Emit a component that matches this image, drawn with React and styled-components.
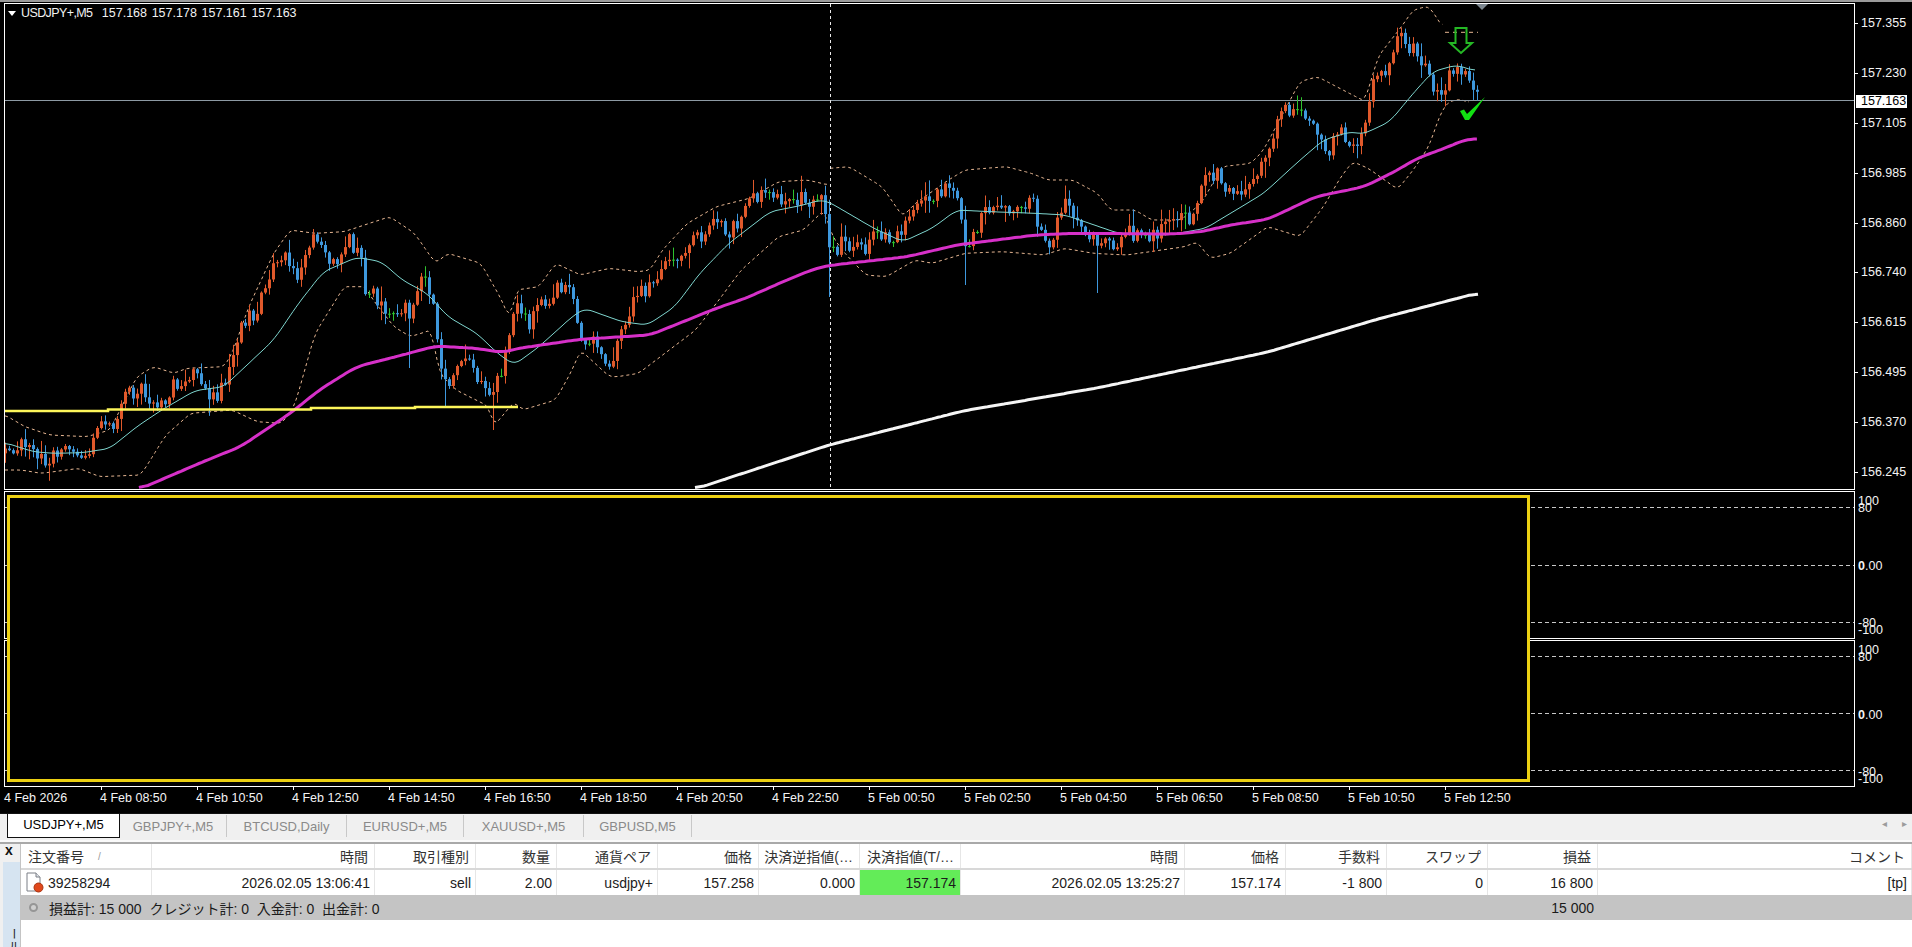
import React, { useMemo } from 'react';
import styled, { createGlobalStyle } from 'styled-components';

// MT4 style terminal: chart panes on top, tab strip and trade history below.

const GlobalStyle = createGlobalStyle`
  html, body { margin: 0; padding: 0; background: #fff; overflow: hidden; }
  * { box-sizing: border-box; }
`;

const FONT = `"Liberation Sans", "Noto Sans CJK JP", sans-serif`;

const Page = styled.div`
  width: 1912px;
  height: 947px;
  display: flex;
  flex-direction: column;
  font-family: ${FONT};
  font-size: 12.5px;
  overflow: hidden;
  background: #fff;
`;

const TopEdge = styled.div`
  height: 2px;
  background: #9a9a9a;
  flex-shrink: 0;
`;

const ChartArea = styled.div`
  position: relative;
  height: 811px;
  flex-shrink: 0;
  background: #000;
  padding: 1px 0 0 4px;
  color: #f4f4f4;
`;

const Pane = styled.div`
  display: flex;
  height: ${(p) => p.$height}px;
  margin-bottom: ${(p) => p.$gap || 0}px;
`;

const Plot = styled.div`
  position: relative;
  width: 1851px;
  flex-shrink: 0;
  border: 1px solid #fff;
  overflow: hidden;
  svg { display: block; }
`;

const Legend = styled.div`
  position: absolute;
  left: 3px;
  top: 2px;
  display: flex;
  align-items: center;
  gap: 5px;
  line-height: 14px;
  white-space: pre;
  word-spacing: 1.2px;
  color: #f2f2f2;
  span { letter-spacing: -0.6px; }
`;

const LegendArrow = styled.i`
  width: 0;
  height: 0;
  border-left: 4.5px solid transparent;
  border-right: 4.5px solid transparent;
  border-top: 5px solid #fff;
`;

const Marker = styled.i`
  position: absolute;
  left: 1471px;
  top: 0;
  width: 0;
  height: 0;
  border-left: 6px solid transparent;
  border-right: 6px solid transparent;
  border-top: 6px solid #7d8790;
`;

const PriceScale = styled.div`
  position: relative;
  width: 57px;
  padding-top: 13px;
  display: flex;
  flex-direction: column;
`;

const PriceRow = styled.div`
  position: relative;
  height: 49.9px;
  flex-shrink: 0;
  padding-left: 6px;
  line-height: 14px;
  &::before {
    content: '';
    position: absolute;
    left: 0;
    top: 7px;
    width: 3px;
    height: 1px;
    background: #fff;
  }
`;

const PriceTag = styled.div`
  position: absolute;
  left: 1px;
  top: 92px;
  width: 51px;
  height: 13px;
  line-height: 13px;
  padding-left: 5px;
  background: #fff;
  color: #000;
`;

const LevelStack = styled.div`
  height: 100%;
  padding: 15px 0;
  display: flex;
  flex-direction: column;
  justify-content: space-between;
`;

const Level = styled.div`
  height: 1px;
  background: repeating-linear-gradient(90deg, #c8c8c8 0 4px, transparent 4px 7px);
`;

const SubScale = styled.div`
  position: relative;
  width: 57px;
`;

const ScaleLabel = styled.div`
  position: absolute;
  left: 3px;
  top: ${(p) => p.$top}px;
  line-height: 12px;
  b { font-weight: 700; }
`;

const YellowBox = styled.div`
  position: absolute;
  left: 7px;
  top: 493px;
  width: 1523px;
  height: 287px;
  border: 3px solid #ecd012;
  background: #000;
`;

const TimeAxis = styled.div`
  display: flex;
  height: 24px;
`;

const TimeLabel = styled.div`
  position: relative;
  width: 96px;
  flex-shrink: 0;
  padding-top: 4px;
  line-height: 14px;
  white-space: nowrap;
  &::before {
    content: '';
    position: absolute;
    left: 1px;
    top: 0;
    width: 1px;
    height: 3px;
    background: ${(p) => (p.$first ? 'transparent' : '#fff')};
  }
`;

const TabStrip = styled.div`
  display: flex;
  align-items: flex-start;
  height: 27px;
  padding-left: 7px;
  flex-shrink: 0;
  background: #f0f0f0;
  border-top: 1px solid #111;
  box-shadow: 0 -1px 0 #e8e8e8;
`;

const Tab = styled.div`
  height: ${(p) => (p.$active ? 24 : 22)}px;
  line-height: ${(p) => (p.$active ? 22 : 24)}px;
  width: ${(p) => p.$width}px;
  font-size: 13px;
  text-align: center;
  white-space: nowrap;
  color: ${(p) => (p.$active ? '#000' : '#8a8a8a')};
  background: ${(p) => (p.$active ? '#fff' : 'transparent')};
  border-left: ${(p) => (p.$active ? '1px solid #111' : '0')};
  border-right: 1px solid ${(p) => (p.$active ? '#111' : '#c8c8c8')};
  border-bottom: ${(p) => (p.$active ? '1px solid #111' : '0')};
  margin-top: ${(p) => (p.$active ? 0 : 1)}px;
`;

const TabScroll = styled.div`
  margin-left: auto;
  display: flex;
  gap: 15px;
  padding: 4px 5px 0 0;
  font-size: 10px;
  line-height: 12px;
  color: #9c9c9c;
`;

const Dock = styled.div`
  flex: 1;
  display: flex;
  min-height: 0;
  margin-top: 2px;
  border-top: 2px solid #a9a9a9;
  box-shadow: 0 -2px 0 #fafafa;
  font-size: 14px;
`;

const DockSide = styled.div`
  position: relative;
  width: 20px;
  flex-shrink: 0;
  background: #f0f0f0;
`;

const DockClose = styled.div`
  margin-left: 5px;
  font-size: 14px;
  line-height: 12px;
  font-weight: 700;
  color: #111;
`;

const DockTitle = styled.div`
  position: absolute;
  left: 3px;
  top: 18px;
  bottom: 0;
  width: 17px;
  padding-top: 66px;
  background: #d6e4f1;
  writing-mode: vertical-rl;
  font-size: 12px;
  line-height: 15px;
  color: #222;
  white-space: nowrap;
  overflow: hidden;
`;

const Table = styled.div`
  flex: 1;
  display: flex;
  flex-direction: column;
  min-width: 0;
  border-left: 1px solid #c4c4c4;
`;

const Row = styled.div`
  display: grid;
  grid-template-columns: 131px 223px 101px 81px 101px 101px 101px 101px 224px 101px 101px 101px 110px 1fr;
  height: ${(p) => p.$height}px;
  flex-shrink: 0;
  border-bottom: ${(p) => (p.$rule ? '2px solid #d8d8d8' : '0')};
`;

const Cell = styled.div`
  display: flex;
  align-items: center;
  justify-content: ${(p) => (p.$left ? 'flex-start' : 'flex-end')};
  gap: 4px;
  padding: 0 ${(p) => (p.$left ? 0 : 4)}px 0 ${(p) => (p.$left ? 4 : 0)}px;
  border-right: 1px solid #e6e6e6;
  background: ${(p) => p.$bg || 'transparent'};
  color: #1c1c1c;
  white-space: nowrap;
  overflow: hidden;
`;

const HeadCell = styled(Cell)`
  color: #333;
  padding-right: ${(p) => (p.$left ? 0 : 6)}px;
  padding-left: ${(p) => (p.$left ? 7 : 0)}px;
`;

const SortMark = styled.span`
  margin-left: 10px;
  color: #999;
  font-size: 10px;
`;

const SummaryRow = styled.div`
  display: grid;
  grid-template-columns: 1467px 110px 1fr;
  height: 25px;
  flex-shrink: 0;
  background: #c4c4c4;
  color: #1a1a1a;
`;

const SummaryText = styled.div`
  display: flex;
  align-items: center;
  gap: 11px;
  padding-left: 8px;
  white-space: pre;
`;

const SummaryTotal = styled.div`
  display: flex;
  align-items: center;
  justify-content: flex-end;
  padding-right: 4px;
`;

const Bullet = styled.i`
  width: 9px;
  height: 9px;
  border-radius: 50%;
  border: 2px solid #969696;
  background: #cfcfcf;
`;

/* ---------- chart geometry, all in page pixels ---------- */

const fromA = (pts) => pts.map(([x, y]) => [x / 2.412, 200 + y / 3]); // left third
const fromB = (pts) => pts.map(([x, y]) => [650 + x / 2.412, 130 + y / 3]); // middle
const fromC = (pts) => pts.map(([x, y]) => [1300 + x / 2.562, y / 3]); // right

const PRICE = [
  ...fromA([[12,760],[40,730],[60,730],[90,790],[130,760],[160,720],[205,770],[230,690],[270,680],[300,600],[330,560],[350,590],[390,610],[430,540],[470,520],[520,600],[550,520],[580,370],[620,330],[660,210],[680,170],[720,240],[760,110],[800,190],[840,120],[870,170],[880,260],[950,340],[990,330],[1010,240],[1030,240],[1050,350],[1060,480],[1080,560],[1130,470],[1170,570],[1190,590],[1225,430],[1250,300],[1270,380],[1345,250],[1385,290],[1400,420],[1440,420],[1470,520],[1490,400],[1530,300]]),
  ...fromB([[0,470],[30,420],[60,390],[100,340],[170,250],[190,320],[240,210],[260,190],[330,200],[420,220],[432,360],[470,340],[520,350],[545,310],[590,320],[640,240],[680,190],[735,180],[750,280],[765,360],[790,280],[830,210],[880,260],[920,180],[930,300],[960,340],[1000,230],[1040,300],[1080,340],[1130,330],[1150,310],[1230,310],[1280,265],[1310,265],[1340,150],[1370,120],[1400,200],[1470,120],[1495,60],[1505,0]]),
  [1283, 104],
  [1292, 112],
  ...fromC([[0,300],[20,370],[40,380],[65,460],[105,400],[135,440],[165,400],[180,270],[205,210],[230,200],[255,110],[300,160],[330,240],[360,285],[395,190],[425,210],[440,280],[458,296]]),
];

const MAGENTA = [
  ...fromA([[335,868],[490,785],[580,740],[700,640],[770,570],[860,500],[980,462],[1050,438],[1150,445],[1210,458],[1250,445],[1400,418],[1568,405]]),
  ...fromB([[30,600],[160,535],[230,505],[330,450],[400,415],[440,405],[620,380],[740,345],[930,315],[1020,310],[1260,312],[1330,305],[1400,285],[1490,268],[1568,222]]),
  ...fromC([[40,590],[165,560],[250,510],[300,475],[370,445],[425,418],[455,416]]),
];

const WHITE_LINE = [[695,489],[756,469],[829,445],[963,411],[1097,388],[1268,352],[1378,319],[1478,293]];

const CYAN = [
  ...fromA([[12,728],[80,755],[130,760],[200,758],[265,745],[330,680],[390,630],[470,572],[540,560],[600,490],[660,420],[720,310],[780,215],[860,172],[920,185],[970,240],[1030,280],[1080,350],[1150,400],[1200,460],[1240,495],[1300,440],[1380,350],[1410,325],[1500,365],[1560,375]]),
  ...fromB([[0,580],[60,530],[120,430],[190,340],[290,245],[370,225],[410,210],[430,215],[540,295],[610,335],[680,295],[740,240],[820,245],[930,250],[1000,255],[1060,280],[1130,310],[1250,315],[1340,295],[1480,190],[1568,90]]),
  ...fromC([[60,420],[130,395],[160,403],[230,365],[290,280],[340,215],[400,195],[455,215]]),
];

const UPPER_A = [
  ...fromA([[12,645],[60,680],[120,705],[210,710],[265,690],[330,530],[370,500],[420,520],[450,505],[540,500],[560,460],[600,320],[660,160],[700,90],[760,100],[830,95],[940,50],[1000,100],[1050,190],[1080,160],[1160,190],[1210,300],[1230,360],[1245,270],[1300,260],[1340,190],[1400,225],[1470,205],[1540,215]]),
  ...fromB([[0,420],[30,360],[90,280],[160,230],[240,205],[310,155],[380,150],[430,165]]),
];
const UPPER_B = [
  ...fromB([[435,115],[480,110],[560,170],[610,260],[640,220],[720,150],[760,120],[860,110],[920,130],[960,150],[1020,150],[1080,190],[1110,240],[1170,240],[1210,270],[1280,270],[1330,220],[1380,110],[1450,100],[1480,60]]),
  ...fromC([[0,245],[45,230],[110,270],[165,303],[175,270],[200,170],[260,80],[290,30],[330,18],[360,70],[372,97]]),
];
const UPPER_TAIL = [[1445,32.300],[1478,32.300]];
const LOWER = [
  ...fromA([[12,810],[50,810],[100,820],[190,805],[240,830],[340,825],[400,705],[460,640],[560,630],[620,665],[680,670],[710,620],[760,400],[830,260],[880,260],[900,300],[950,380],[990,410],[1040,390],[1060,520],[1100,570],[1180,620],[1190,680],[1240,605],[1260,630],[1340,600],[1380,510],[1400,450],[1470,530],[1490,530],[1540,520]]),
  ...fromB([[110,600],[160,520],[220,420],[310,320],[370,300],[420,240],[440,320],[470,370],[520,435],[570,440],[640,390],[680,400],[760,370],[850,365],[950,375],[1000,355],[1070,370],[1150,375],[1290,350],[1320,335],[1350,385],[1400,370],[1490,290],[1568,320]]),
  ...fromC([[60,620],[105,530],[135,485],[175,505],[250,568],[290,510],[330,440],[360,340],[380,305],[410,298],[440,310]]),
];

// long wicks that stand out in the picture: [x, lowest y]
const SPIKES = { 408: 368, 446: 407, 493: 430, 829: 297, 965: 285, 1097: 293 };

const toPoints = (pts) => pts.map(([x, y]) => `${x.toFixed(1)},${y.toFixed(1)}`).join(' ');

const valueAt = (pts, x) => {
  for (let i = 1; i < pts.length; i++) {
    if (x <= pts[i][0]) {
      const [x0, y0] = pts[i - 1];
      const [x1, y1] = pts[i];
      return x1 === x0 ? y1 : y0 + ((y1 - y0) * (x - x0)) / (x1 - x0);
    }
  }
  return pts[pts.length - 1][1];
};

// resample a hand-read polyline and run a moving average over it
const smooth = (pts, win = 2, step = 3) => {
  const start = pts[0][0];
  const end = pts[pts.length - 1][0];
  const ys = [];
  for (let x = start; x <= end; x += step) ys.push(valueAt(pts, x));
  return ys.map((_, i) => {
    const a = Math.max(0, i - win);
    const b = Math.min(ys.length - 1, i + win);
    let sum = 0;
    for (let k = a; k <= b; k++) sum += ys[k];
    return [start + i * step, sum / (b - a + 1)];
  });
};

function makeCandles() {
  let seed = 20260205;
  const rnd = () => {
    seed = (seed + 0x6d2b79f5) | 0;
    let t = Math.imul(seed ^ (seed >>> 15), 1 | seed);
    t = (t + Math.imul(t ^ (t >>> 7), 61 | t)) ^ t;
    return ((t ^ (t >>> 14)) >>> 0) / 4294967296;
  };
  const out = [];
  let prev = valueAt(PRICE, 5);
  for (let x = 5; x <= 1478; x += 4) {
    const close = valueAt(PRICE, x) + (rnd() - 0.5) * 17;
    const top = Math.min(prev, close);
    const bottom = Math.max(prev, close);
    let high = top - 1 - rnd() * rnd() * 16;
    let low = bottom + 1 + rnd() * rnd() * 16;
    const spikeKey = Object.keys(SPIKES).find((k) => Math.abs(k - x) < 2);
    if (spikeKey) low = SPIKES[spikeKey];
    const doji = !spikeKey && bottom - top < 0.9;
    if (high < 8) high = 8;
    out.push({ x, top, h: Math.max(bottom - top, 1), high, low, up: close < prev, doji });
    prev = close;
  }
  return out;
}

const CANDLE_COLOR = { up: '#e0592b', down: '#3e98dd', doji: '#2ec22e' };

const MainChart = () => {
  const candles = useMemo(makeCandles, []);
  return (
    <svg width="1849" height="485" viewBox="5 4 1849 485">
      <polyline points={toPoints(smooth(UPPER_A, 1))} fill="none" stroke="#e6b692" strokeDasharray="3 3" />
      <polyline points={toPoints(smooth(UPPER_B, 1))} fill="none" stroke="#e6b692" strokeDasharray="3 3" />
      <polyline points={toPoints(UPPER_TAIL)} fill="none" stroke="#e6b692" strokeDasharray="4 4" />
      <polyline points={toPoints(smooth(LOWER, 1))} fill="none" stroke="#e6b692" strokeDasharray="3 3" />
      <line x1="5" x2="1854" y1="100.5" y2="100.5" stroke="#8d9aa4" />
      <line x1="830.5" x2="830.5" y1="4" y2="489" stroke="#e8e8e8" strokeDasharray="3 3" />
      <polyline points={toPoints(smooth(WHITE_LINE, 3))} fill="none" stroke="#f5f5f5" strokeWidth="3" />
      {candles.map((c) => {
        const col = c.doji ? CANDLE_COLOR.doji : c.up ? CANDLE_COLOR.up : CANDLE_COLOR.down;
        return (
          <g key={c.x}>
            <line x1={c.x + 0.5} x2={c.x + 0.5} y1={c.high} y2={c.low} stroke={col} />
            <rect x={c.x - 1} y={c.top} width="3" height={c.h} fill={col} />
          </g>
        );
      })}
      <polyline points={toPoints(smooth(CYAN, 2))} fill="none" stroke="#7fd6cf" />
      <polyline points={toPoints(smooth(MAGENTA, 3))} fill="none" stroke="#d630c8" strokeWidth="3" />
      <polyline
        points="5,411 108,411 108,409.5 311,409.5 311,408 415,408 415,407 518,407"
        fill="none"
        stroke="#fdf65a"
        strokeWidth="2.5"
      />
      <path d="M1455.500 28h11v15h5.500l-11 10-11-10h5.500z" fill="none" stroke="#25b825" strokeWidth="2" />
      <path d="M1460 111l4-1.500 3 4.500 18-17-16 23h-4z" fill="#12e012" />
      <path d="M240 493q7-3 14 0" fill="none" stroke="#7fd6cf" />
    </svg>
  );
};

const PRICES = ['157.355', '157.230', '157.105', '156.985', '156.860', '156.740', '156.615', '156.495', '156.370', '156.245'];

const TIMES = ['4 Feb 2026', '4 Feb 08:50', '4 Feb 10:50', '4 Feb 12:50', '4 Feb 14:50', '4 Feb 16:50', '4 Feb 18:50', '4 Feb 20:50', '4 Feb 22:50', '5 Feb 00:50', '5 Feb 02:50', '5 Feb 04:50', '5 Feb 06:50', '5 Feb 08:50', '5 Feb 10:50', '5 Feb 12:50'];

const TABS = [
  { name: 'USDJPY+,M5', width: 113, active: true },
  { name: 'GBPJPY+,M5', width: 107 },
  { name: 'BTCUSD,Daily', width: 120 },
  { name: 'EURUSD+,M5', width: 117 },
  { name: 'XAUUSD+,M5', width: 120 },
  { name: 'GBPUSD,M5', width: 108 },
];

const HEADERS = ['注文番号', '時間', '取引種別', '数量', '通貨ペア', '価格', '決済逆指値(…', '決済指値(T/…', '時間', '価格', '手数料', 'スワップ', '損益', 'コメント'];
const ROW = ['39258294', '2026.02.05 13:06:41', 'sell', '2.00', 'usdjpy+', '157.258', '0.000', '157.174', '2026.02.05 13:25:27', '157.174', '-1 800', '0', '16 800', '[tp]'];

const OrderIcon = () => (
  <svg width="19" height="21" viewBox="0 0 19 21">
    <path d="M2 1h9l4 4v14H2z" fill="#fff" stroke="#7a7f86" />
    <path d="M11 1v4h4" fill="#dfe3e8" stroke="#7a7f86" />
    <circle cx="13.500" cy="15.500" r="4.500" fill="#e0481c" stroke="#a83210" />
  </svg>
);

const SubPane = ({ height, gap }) => (
  <Pane $height={height} $gap={gap}>
    <Plot>
      <LevelStack>
        <Level />
        <Level />
        <Level />
      </LevelStack>
    </Plot>
    <SubScale>
      <ScaleLabel $top={4}>100</ScaleLabel>
      <ScaleLabel $top={11}>80</ScaleLabel>
      <ScaleLabel $top={69}><b>0</b>.00</ScaleLabel>
      <ScaleLabel $top={126}>-80</ScaleLabel>
      <ScaleLabel $top={133}>-100</ScaleLabel>
    </SubScale>
  </Pane>
);

export default function App() {
  return (
    <Page>
      <GlobalStyle />
      <TopEdge />
      <ChartArea>
        <Pane $height={487} $gap={1}>
          <Plot>
            <MainChart />
            <Legend>
              <LegendArrow />
              <div><span>USDJPY+,M5</span>  157.168 157.178 157.161 157.163</div>
            </Legend>
            <Marker />
          </Plot>
          <PriceScale>
            {PRICES.map((p) => (
              <PriceRow key={p}>{p}</PriceRow>
            ))}
            <PriceTag>157.163</PriceTag>
          </PriceScale>
        </Pane>
        <SubPane height={148} gap={1} />
        <SubPane height={147} />
        <YellowBox />
        <TimeAxis>
          {TIMES.map((t, i) => (
            <TimeLabel key={t} $first={i === 0}>{t}</TimeLabel>
          ))}
        </TimeAxis>
      </ChartArea>

      <TabStrip>
        {TABS.map((t) => (
          <Tab key={t.name} $active={t.active} $width={t.width}>{t.name}</Tab>
        ))}
        <TabScroll>
          <span>◂</span>
          <span>▸</span>
        </TabScroll>
      </TabStrip>

      <Dock>
        <DockSide>
          <DockClose>x</DockClose>
          <DockTitle>ール</DockTitle>
        </DockSide>
        <Table>
          <Row $height={26} $rule>
            {HEADERS.map((h, i) => (
              <HeadCell key={i} $left={i === 0}>
                {h}
                {i === 0 && <SortMark>/</SortMark>}
              </HeadCell>
            ))}
          </Row>
          <Row $height={25}>
            {ROW.map((v, i) => (
              <Cell key={i} $left={i === 0} $bg={i === 7 ? '#63ec58' : undefined}>
                {i === 0 && <OrderIcon />}
                {v}
              </Cell>
            ))}
          </Row>
          <SummaryRow>
            <SummaryText>
              <Bullet />
              損益計: 15 000  クレジット計: 0  入金計: 0  出金計: 0
            </SummaryText>
            <SummaryTotal>15 000</SummaryTotal>
          </SummaryRow>
        </Table>
      </Dock>
    </Page>
  );
}
